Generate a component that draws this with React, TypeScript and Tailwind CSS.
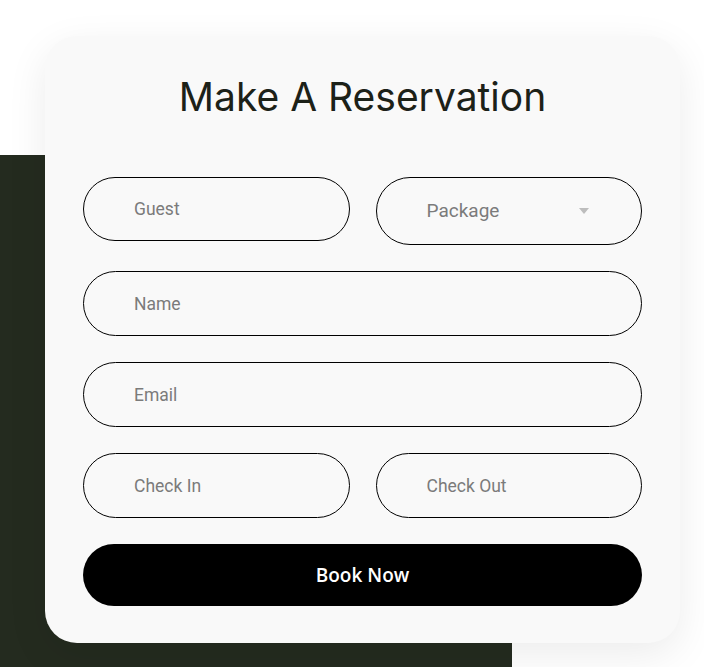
import { ChangeEvent, useState } from "react";

const fieldClass =
  "h-16 w-full rounded-full border border-black bg-transparent pl-[50px] pr-6 text-[17.5px] text-[#333] outline-none placeholder:text-[#7b7b7b] font-['Roboto',sans-serif]";

export default function App() {
  const [form, setForm] = useState({ guest: "", name: "", email: "", checkIn: "", checkOut: "", pkg: "" });

  const update = (key: string) => (e: ChangeEvent<HTMLInputElement | HTMLSelectElement>) =>
    setForm({ ...form, [key]: e.target.value });

  return (
    <div className="relative min-h-[667px] w-full overflow-hidden bg-white">
      {/* dark backdrop block */}
      <div className="absolute left-0 top-[155px] h-[512px] w-[512px] bg-[#242b1f]" />

      <div className="relative pl-[45px] pt-[36px]">
        <div className="w-[635px] rounded-[32px] bg-[#f9f9f9] px-[38px] pb-[37px] pt-[33px] shadow-[0_12px_40px_rgba(0,0,0,0.08)]">
          <h1 className="text-center text-[39px] font-normal leading-[56px] text-[#1c2118] font-['Inter',sans-serif]">
            Make A Reservation
          </h1>

          <form className="mt-[52px] flex flex-col gap-[26px]" onSubmit={(e) => e.preventDefault()}>
            <div className="grid grid-cols-2 items-start gap-[26px]">
              <input className={fieldClass} placeholder="Guest" value={form.guest} onChange={update("guest")} />
              <div className="relative">
                <select
                  className="h-[68px] w-full appearance-none rounded-full border border-black bg-transparent pl-[50px] pr-6 text-[19px] text-[#7b7b7b] outline-none font-['Roboto',sans-serif]"
                  value={form.pkg}
                  onChange={update("pkg")}
                >
                  <option value="">Package</option>
                  <option value="basic">Basic</option>
                  <option value="premium">Premium</option>
                </select>
                <span className="pointer-events-none absolute right-[53px] top-[31px] h-0 w-0 border-x-[5px] border-t-[6px] border-x-transparent border-t-[#bdbdbd]" />
              </div>
            </div>

            <input className={fieldClass + " h-[65px]"} placeholder="Name" value={form.name} onChange={update("name")} />
            <input className={fieldClass + " h-[65px]"} placeholder="Email" value={form.email} onChange={update("email")} />

            <div className="grid grid-cols-2 gap-[26px]">
              <input className={fieldClass + " h-[65px]"} placeholder="Check In" value={form.checkIn} onChange={update("checkIn")} />
              <input className={fieldClass + " h-[65px]"} placeholder="Check Out" value={form.checkOut} onChange={update("checkOut")} />
            </div>

            <button
              type="submit"
              className="h-[62px] w-full rounded-full bg-black text-[19px] font-semibold text-white font-['Open_Sans',sans-serif]"
            >
              Book Now
            </button>
          </form>
        </div>
      </div>
    </div>
  );
}
